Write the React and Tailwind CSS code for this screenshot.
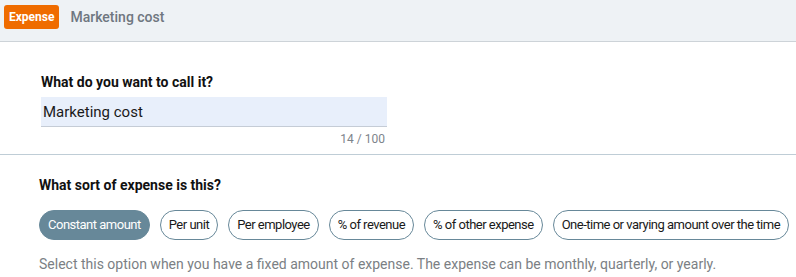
import React, { useState } from 'react';

const options = [
  'Constant amount',
  'Per unit',
  'Per employee',
  '% of revenue',
  '% of other expense',
  'One-time or varying amount over the time',
];

function App() {
  const [name, setName] = useState('Marketing cost');
  const [selected, setSelected] = useState(0);

  return (
    <div className="min-h-screen bg-white font-['Roboto',sans-serif]">
      {/* header */}
      <div className="flex h-[42px] items-start gap-[11px] border-b border-[#cdd3d8] bg-[#eef2f5] pl-[4px] pt-[5px]">
        <span className="rounded-[3px] bg-[#ef6c00] px-[5px] py-[4px] text-[12px] font-bold leading-[16px] text-white">
          Expense
        </span>
        <span className="pt-[3px] text-[14px] font-medium leading-[18px] text-[#6f7780]">Marketing cost</span>
      </div>

      {/* name field */}
      <div className="border-b border-[#bfcdd6] pb-[8px] pl-[41px] pt-[31px]">
        <div className="text-[14px] font-bold leading-[18px] text-[#111]">What do you want to call it?</div>
        <div className="mt-[6px] w-[346px]">
          <input
            className="h-[30px] w-full border-b border-[#c5ccd6] bg-[#e8effb] px-[2px] text-[15px] text-[#1a1a1a] outline-none"
            value={name}
            maxLength={100}
            onChange={(e) => setName(e.target.value)}
          />
          <div className="mt-[5px] text-right text-[12px] leading-[14px] text-[#7d848b] pr-[2px]">
            {name.length} / 100
          </div>
        </div>
      </div>

      {/* type selection */}
      <div className="pl-[39px] pt-[21px]">
        <div className="text-[14px] font-bold leading-[18px] text-[#111]">What sort of expense is this?</div>
        <div className="mt-[16px] flex gap-[10px]">
          {options.map((opt, i) => (
            <button
              key={opt}
              onClick={() => setSelected(i)}
              className={`h-[30px] whitespace-nowrap rounded-full border px-[8px] text-[13px] tracking-[-0.5px] ${
                i === selected
                  ? 'border-[#678899] bg-[#678899] text-white'
                  : 'border-[#678899] bg-white text-[#1a1a1a]'
              }`}
            >
              {opt}
            </button>
          ))}
        </div>
        <p className="mt-[15px] text-[14px] leading-[18px] text-[#7b7f84]">
          Select this option when you have a fixed amount of expense. The expense can be monthly, quarterly, or yearly.
        </p>
      </div>
    </div>
  );
}

export default App;
